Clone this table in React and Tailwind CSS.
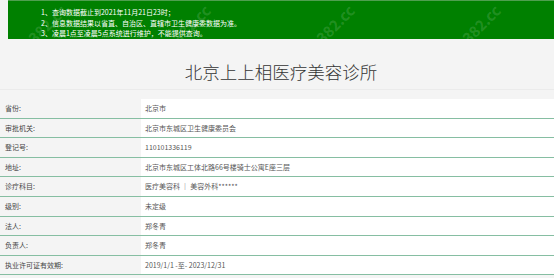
import React from "react";

const rows = [
    ["省份:", "北京市"],
    ["审批机关:", "北京市东城区卫生健康委员会"],
    ["登记号:", "110101336119"],
    ["地址:", "北京市东城区工体北路66号楼骑士公寓E座三层"],
    ["诊疗科目:", "医疗美容科 ｜ 美容外科******"],
    ["级别:", "未定级"],
    ["法人:", "郑冬青"],
    ["负责人:", "郑冬青"],
    ["执业许可证有效期:", "2019/1/1 -至- 2023/12/31"],
];

// faint site watermark over the notice bar
const marks = ["left-[16px]", "left-[160px]", "left-[304px]", "left-[450px]"];

export default function App() {
    return (
        <div
            className="w-full h-[278px] overflow-hidden bg-[#f4f4f4] text-[#333]"
            style={{ fontFamily: '"Noto Sans CJK SC", "Noto Sans", sans-serif' }}
        >
            <div className="relative ml-[8px] h-[39px] overflow-hidden bg-[#008000] border-t border-[#4f9f4f] pl-[33px] pt-[6px] text-white text-[7px] leading-[10.5px]">
                <p className="relative z-10">1、查询数据截止到2021年11月21日23时；</p>
                <p className="relative z-10">2、信息数据结果以省直、自治区、直辖市卫生健康委数据为准。</p>
                <p className="relative z-10">3、凌晨1点至凌晨5点系统进行维护，不能提供查询。</p>
                {marks.map((m) => (
                    <span
                        key={m}
                        className={`absolute ${m} top-[18px] -rotate-45 text-[15px] font-bold text-white/15`}
                    >
                        382.cc
                    </span>
                ))}
            </div>

            <div className="pl-[8px] pt-[24px] pb-[8px] border-b border-[#ebebeb] text-center text-[17.5px] leading-[18px] font-light text-[#333]">
                北京上上相医疗美容诊所
            </div>
            <div className="h-[9px]"></div>

            <div className="text-[7px]">
                {rows.map(([label, value]) => (
                    <div
                        key={label}
                        className="flex h-[19.6px] border-b border-[#86bea2]"
                    >
                        <div className="w-[141px] flex items-center pl-[5px] text-[#444]">
                            {label}
                        </div>
                        <div className="flex-1 flex items-center pl-[4px] bg-white text-[#555]">
                            {value}
                        </div>
                    </div>
                ))}
            </div>
        </div>
    );
}
